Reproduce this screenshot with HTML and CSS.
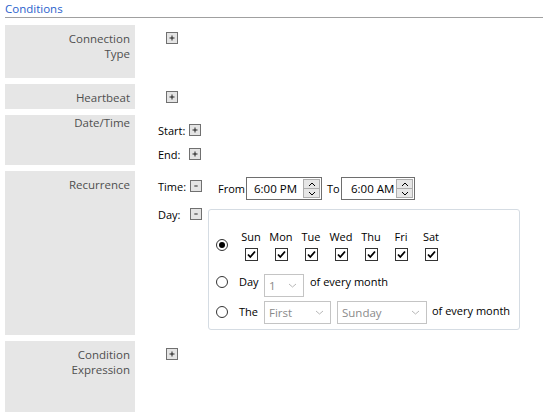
FILE: index.html
```html
<!DOCTYPE html>
<html>
<head>
<meta charset="utf-8">
<link rel="stylesheet" href="styles.css">
</head>
<body>
<div class="title">Conditions</div>
<div class="grid">
  <div class="label">Connection<br>Type</div>
  <div class="content solo"><span class="tbtn"><svg viewBox="0 0 12 12"><path d="M3 6h6M6 3v6" stroke="#000" stroke-width="1"/></svg></span></div>

  <div class="label">Heartbeat</div>
  <div class="content solo"><span class="tbtn"><svg viewBox="0 0 12 12"><path d="M3 6h6M6 3v6" stroke="#000" stroke-width="1"/></svg></span></div>

  <div class="label top">Date/Time</div>
  <div class="content">
    <div class="line"><span class="fl">Start:</span><span class="tbtn"><svg viewBox="0 0 12 12"><path d="M3 6h6M6 3v6" stroke="#000" stroke-width="1"/></svg></span></div>
    <div class="line"><span class="fl">End:</span><span class="tbtn"><svg viewBox="0 0 12 12"><path d="M3 6h6M6 3v6" stroke="#000" stroke-width="1"/></svg></span></div>
  </div>

  <div class="label">Recurrence</div>
  <div class="content">
    <div class="timerow">
      <span class="fl">Time:</span><span class="tbtn"><svg viewBox="0 0 12 12"><path d="M4 6h4" stroke="#000" stroke-width="1"/></svg></span>
      <span class="from">From</span>
      <div class="timebox w1"><span class="tv">6:00 PM</span>
        <div class="spin"><div class="sb"><svg viewBox="0 0 8 5"><path d="M1 4L4 1L7 4" fill="none" stroke="#000" stroke-width="1"/></svg></div><div class="sb"><svg viewBox="0 0 8 5"><path d="M1 1L4 4L7 1" fill="none" stroke="#000" stroke-width="1"/></svg></div></div>
      </div>
      <span class="to">To</span>
      <div class="timebox w2"><span class="tv">6:00 AM</span>
        <div class="spin"><div class="sb"><svg viewBox="0 0 8 5"><path d="M1 4L4 1L7 4" fill="none" stroke="#000" stroke-width="1"/></svg></div><div class="sb"><svg viewBox="0 0 8 5"><path d="M1 1L4 4L7 1" fill="none" stroke="#000" stroke-width="1"/></svg></div></div>
      </div>
    </div>
    <div class="dayrow">
      <span class="fl dl">Day:</span><span class="tbtn dbtn"><svg viewBox="0 0 12 12"><path d="M4 6h4" stroke="#000" stroke-width="1"/></svg></span>
      <div class="box">
        <div class="opt opt1">
          <span class="radio on"></span>
          <div class="days">
            <div class="dcol"><span>Sun</span><span class="cb"><svg viewBox="0 0 11 11"><path d="M2 5.5L4.3 8L9 2.5" fill="none" stroke="#000" stroke-width="1.8"/></svg></span></div>
            <div class="dcol"><span>Mon</span><span class="cb"><svg viewBox="0 0 11 11"><path d="M2 5.5L4.3 8L9 2.5" fill="none" stroke="#000" stroke-width="1.8"/></svg></span></div>
            <div class="dcol"><span>Tue</span><span class="cb"><svg viewBox="0 0 11 11"><path d="M2 5.5L4.3 8L9 2.5" fill="none" stroke="#000" stroke-width="1.8"/></svg></span></div>
            <div class="dcol"><span>Wed</span><span class="cb"><svg viewBox="0 0 11 11"><path d="M2 5.5L4.3 8L9 2.5" fill="none" stroke="#000" stroke-width="1.8"/></svg></span></div>
            <div class="dcol"><span>Thu</span><span class="cb"><svg viewBox="0 0 11 11"><path d="M2 5.5L4.3 8L9 2.5" fill="none" stroke="#000" stroke-width="1.8"/></svg></span></div>
            <div class="dcol"><span>Fri</span><span class="cb"><svg viewBox="0 0 11 11"><path d="M2 5.5L4.3 8L9 2.5" fill="none" stroke="#000" stroke-width="1.8"/></svg></span></div>
            <div class="dcol"><span>Sat</span><span class="cb"><svg viewBox="0 0 11 11"><path d="M2 5.5L4.3 8L9 2.5" fill="none" stroke="#000" stroke-width="1.8"/></svg></span></div>
          </div>
        </div>
        <div class="opt opt2">
          <span class="radio"></span><span class="ot">Day</span>
          <div class="sel s1"><span>1</span><svg viewBox="0 0 9 5"><path d="M1 1L4.5 4L8 1" fill="none" stroke="#b8b8b8" stroke-width="1"/></svg></div>
          <span class="ot after">of every month</span>
        </div>
        <div class="opt opt3">
          <span class="radio"></span><span class="ot">The</span>
          <div class="sel s2"><span>First</span><svg viewBox="0 0 9 5"><path d="M1 1L4.5 4L8 1" fill="none" stroke="#b8b8b8" stroke-width="1"/></svg></div>
          <div class="sel s3"><span>Sunday</span><svg viewBox="0 0 9 5"><path d="M1 1L4.5 4L8 1" fill="none" stroke="#b8b8b8" stroke-width="1"/></svg></div>
          <span class="ot after2">of every month</span>
        </div>
      </div>
    </div>
  </div>

  <div class="label">Condition<br>Expression</div>
  <div class="content solo"><span class="tbtn"><svg viewBox="0 0 12 12"><path d="M3 6h6M6 3v6" stroke="#000" stroke-width="1"/></svg></span></div>
</div>
</body>
</html>
```
FILE: styles.css
```css
* { box-sizing: border-box; }
body {
  margin: 0;
  padding: 0 0 0 5px;
  font-family: "Open Sans", "Noto Sans", sans-serif;
  font-size: 11px;
  line-height: 15px;
  color: #000;
  background: #fff;
}
.title {
  color: #2a62cc;
  font-size: 11.5px;
  height: 18px;
  padding-top: 1px;
  border-bottom: 1px solid #a0a0a0;
  margin-bottom: 7px;
}
.grid {
  display: grid;
  grid-template-columns: 130px 1fr;
  grid-template-rows: 53px 25px 50px 164px 71px;
  row-gap: 6px;
}
.label {
  background: #e6e6e6;
  color: #4f4f4f;
  text-align: right;
  padding: 6px 5px 0 0;
  font-size: 11.5px;
}
.label.top { padding-top: 0; }
.content {
  padding-left: 23px;
}
.content.solo { padding-left: 31px; padding-top: 7px; }
.tbtn {
  display: inline-block;
  width: 12px;
  height: 12px;
  border: 1px solid #707070;
  background: #e4e4e4;
  flex: none;
}
.tbtn svg { display: block; width: 10px; height: 10px; }
.content.solo .tbtn { display: block; }
.line {
  display: flex;
  align-items: center;
  height: 24px;
}
.line:first-child { margin-top: 3px; }
.fl { width: 31px; flex: none; }
.timerow {
  display: flex;
  align-items: center;
  margin-top: 6px;
  height: 23px;
}
.timerow .fl { margin-top: -4px; width: 32px; }
.timerow .tbtn { margin-top: -5px; }
.from { margin-left: 16px; width: 28px; }
.to { margin-left: 5px; width: 14px; }
.timebox {
  height: 23px;
  border: 1px solid #6e6e6e;
  display: flex;
  align-items: center;
  justify-content: space-between;
  padding-left: 7px;
  padding-right: 1px;
  font-size: 11.5px;
}
.timebox.w1 { width: 76px; }
.timebox.w2 { width: 74px; padding-left: 9px; }
.spin {
  width: 17px;
  height: 19px;
  display: flex;
  flex-direction: column;
}
.sb {
  flex: 1;
  background: #e6e6e6;
  border: 1px solid #adadad;
  display: flex;
  align-items: center;
  justify-content: center;
}
.sb + .sb { border-top: none; }
.sb svg { width: 8px; height: 5px; display: block; }
.dayrow {
  display: flex;
  align-items: flex-start;
  margin-top: 4px;
}
.dayrow .dl { margin-top: 3px; width: 32px; }
.dbtn { margin-top: 4px; }
.box {
  margin-left: 6px;
  margin-top: 5px;
  width: 312px;
  height: 121px;
  border: 1px solid #d5dce3;
  border-radius: 3px;
  padding: 17px 0 0 7px;
}
.opt {
  display: flex;
  align-items: center;
  height: 24px;
}
.opt1 { height: 36px; }
.opt2 { margin-top: 7px; }
.opt3 { margin-top: 6px; }
.radio {
  width: 12px;
  height: 12px;
  border: 1px solid #333;
  border-radius: 50%;
  flex: none;
  position: relative;
  background: #fff;
}
.radio.on::after {
  content: "";
  position: absolute;
  left: 2px;
  top: 2px;
  width: 6px;
  height: 6px;
  border-radius: 50%;
  background: #000;
}
.days {
  display: flex;
  margin-left: 8px;
}
.dcol {
  width: 30px;
  display: flex;
  flex-direction: column;
  align-items: center;
  gap: 4px;
}
.cb {
  width: 13px;
  height: 13px;
  border: 1px solid #333;
  background: #fff;
  display: block;
}
.cb svg { width: 11px; height: 11px; display: block; }
.ot { margin-left: 11px; width: 25px; margin-top: -2px; }
.after, .after2 { width: auto; margin-top: -2px; }
.after { margin-left: 6px; }
.after2 { margin-left: 5px; margin-top: -4px; }
.opt3 .ot:first-of-type { margin-top: -4px; }
.sel {
  height: 23px;
  border: 1px solid #c4c4c4;
  background: #fff;
  color: #8a8a8a;
  display: flex;
  align-items: center;
  justify-content: space-between;
  padding: 0 6px 0 4px;
  font-size: 11.5px;
}
.opt2 .sel { margin-top: 7px; }
.sel svg { width: 9px; height: 5px; display: block; }
.s1 { width: 40px; }
.s2 { width: 67px; }
.s3 { width: 90px; margin-left: 6px; }
```
